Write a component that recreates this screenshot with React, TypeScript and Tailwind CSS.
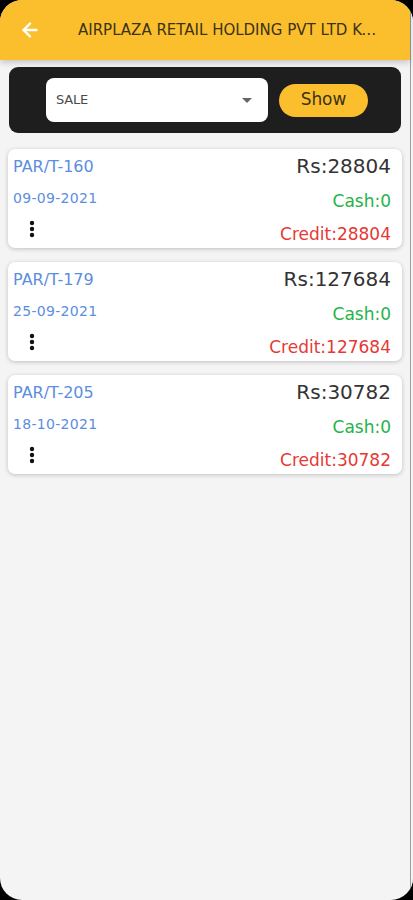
import { ArrowLeft } from "lucide-react";

const bills = [
  { no: "PAR/T-160", date: "09-09-2021", total: "28804", cash: "0", credit: "28804" },
  { no: "PAR/T-179", date: "25-09-2021", total: "127684", cash: "0", credit: "127684" },
  { no: "PAR/T-205", date: "18-10-2021", total: "30782", cash: "0", credit: "30782" },
];

function Kebab() {
  return (
    <svg width="6" height="18" viewBox="0 0 6 18" className="block">
      <circle cx="3" cy="3" r="2.2" fill="#111" />
      <circle cx="3" cy="9" r="2.2" fill="#111" />
      <circle cx="3" cy="15" r="2.2" fill="#111" />
    </svg>
  );
}

export default function App() {
  return (
    <div className="w-[413px] h-[900px] bg-black font-['DejaVu_Sans',sans-serif]">
      <div className="w-full h-full rounded-[22px] overflow-hidden bg-[#f4f4f4] flex">
        <div className="flex-1 min-w-0 flex flex-col">
          {/* header */}
          <div className="h-[60px] bg-[#fbbf2e] flex items-center shadow-[0_3px_6px_rgba(0,0,0,0.18)] relative z-10">
            <div className="w-[78px] pl-[19px] shrink-0">
              <ArrowLeft size={22} strokeWidth={2.6} className="text-white" />
            </div>
            <div className="flex-1 mr-[23px] min-w-0 text-[15px] text-[#3b3316] whitespace-nowrap overflow-hidden text-ellipsis">
              AIRPLAZA RETAIL HOLDING PVT LTD KOLKATA
            </div>
          </div>

          {/* filter bar */}
          <div className="px-[9px] pt-[7px]">
            <div className="h-[66px] bg-[#1e1e1e] rounded-[9px] flex items-center pl-[37px] pr-[26px] gap-[11px]">
              <div className="w-[222px] h-[44px] bg-white rounded-[8px] flex items-center justify-between pl-[10px] pr-[16px]">
                <span className="text-[13px] text-[#4a4a4a] tracking-[-0.2px]">SALE</span>
                <svg width="10" height="5" viewBox="0 0 10 5">
                  <path d="M0 0 L10 0 L5 5 Z" fill="#666" />
                </svg>
              </div>
              <div className="w-[89px] h-[33px] bg-[#fbbf2e] rounded-full flex items-center justify-center text-[17px] text-[#3b3316] tracking-[-0.1px]">
                Show
              </div>
            </div>
          </div>

          {/* list */}
          <div className="px-[8px] pt-[16px] flex flex-col gap-[14px]">
            {bills.map((b) => (
              <div
                key={b.no}
                className="h-[99px] bg-white rounded-[7px] shadow-[0_1px_4px_rgba(0,0,0,0.22)] flex justify-between pl-[5px] pr-[11px] pt-[6px] pb-[4px]"
              >
                <div className="flex flex-col">
                  <span className="text-[16px] leading-[24px] text-[#5b8ee0]">{b.no}</span>
                  <span className="text-[14px] leading-[20px] mt-[9px] text-[#5b8ee0] tracking-[0.3px]">{b.date}</span>
                  <div className="mt-[12px] pl-[16px]">
                    <Kebab />
                  </div>
                </div>
                <div className="flex flex-col items-end -mt-[2px]">
                  <span className="text-[20px] leading-[26px] text-[#333]">Rs:{b.total}</span>
                  <span className="text-[17px] leading-[22px] mt-[11px] text-[#26b34a]">Cash:{b.cash}</span>
                  <span className="text-[17px] leading-[22px] mt-[11px] text-[#e53935]">Credit:{b.credit}</span>
                </div>
              </div>
            ))}
          </div>
        </div>
        <div className="w-[1px] bg-[#9c9c9c]" />
        <div className="w-[2px] bg-[#f4f4f4]" />
      </div>
    </div>
  );
}
